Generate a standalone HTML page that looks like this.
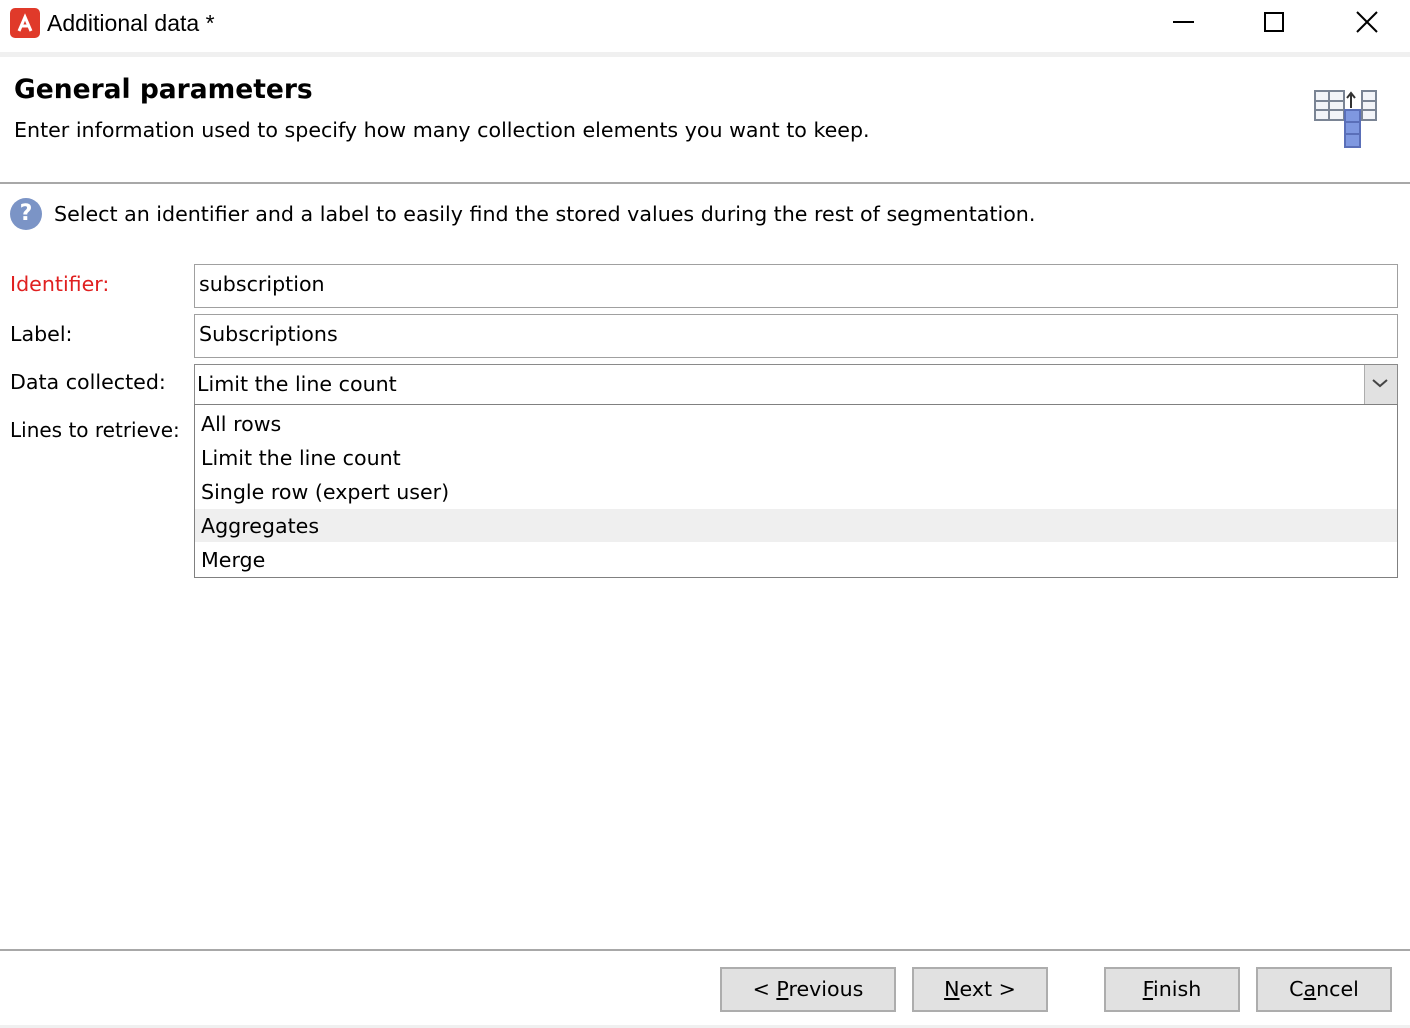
<!DOCTYPE html>
<html><head><style>
*{margin:0;padding:0;box-sizing:border-box}
body{width:1410px;height:1028px;background:#fff;font-family:"DejaVu Sans","Liberation Sans",sans-serif;color:#000;position:relative;overflow:hidden}
.a{position:absolute;white-space:nowrap}
.t{font-size:20.6px}
.box{position:absolute;border:1px solid #a0a0a0;background:#fff}
.btn{position:absolute;top:967px;height:45px;background:#e1e1e1;border:2px solid #adadad;font-size:20.6px;text-align:center;line-height:41px}
u{text-decoration:underline}
</style></head><body>
<div class="a" style="left:10px;top:8px;width:30px;height:30px;background:#e03a2a;border-radius:5px"></div>
<svg class="a" style="left:10px;top:8px" width="30" height="30"><path d="M9 23 L15 9 L21 23 M12 18 L18 18" stroke="#fff" stroke-width="3" fill="none"/></svg>
<div class="a" style="left:47px;top:10px;font-size:23px;font-family:'Liberation Sans',sans-serif">Additional data *</div>
<div class="a" style="left:1173px;top:21px;width:21px;height:2px;background:#000"></div>
<div class="a" style="left:1264px;top:12px;width:20px;height:20px;border:2px solid #000"></div>
<svg class="a" style="left:1356px;top:11px" width="22" height="22"><path d="M1 1L21 21M21 1L1 21" stroke="#000" stroke-width="2"/></svg>
<div class="a" style="left:0;top:52px;width:1410px;height:5px;background:#f0f0f0"></div>
<div class="a" style="left:14px;top:74px;font-size:26.5px;font-weight:bold">General parameters</div>
<div class="a t" style="left:14px;top:118px">Enter information used to specify how many collection elements you want to keep.</div>
<svg class="a" style="left:1310px;top:88px" width="70" height="62">
<rect x="5" y="3" width="29" height="29" fill="#f2f4f8" stroke="#7a8494" stroke-width="2"/>
<path d="M5 13H34M5 22H34M19 3V32" stroke="#7a8494" stroke-width="2"/>
<rect x="52" y="3" width="14" height="29" fill="#f2f4f8" stroke="#7a8494" stroke-width="2"/>
<path d="M52 13H66M52 22H66" stroke="#7a8494" stroke-width="2"/>
<rect x="35" y="22" width="15" height="37" fill="#7f98e0" stroke="#5a6fb8" stroke-width="2"/>
<path d="M35 34H50M35 46H50" stroke="#5a6fb8" stroke-width="2"/>
<path d="M41 20V5M37 10L41 5L45 10" stroke="#333" stroke-width="2" fill="none"/>
</svg>
<div class="a" style="left:0;top:182px;width:1410px;height:2px;background:#a8a8a8"></div>
<div class="a" style="left:10px;top:198px;width:32px;height:32px;border-radius:50%;background:#7b94c6;color:#fff;font-weight:bold;font-size:22px;text-align:center;line-height:32px">?</div>
<div class="a t" style="left:54px;top:202px">Select an identifier and a label to easily find the stored values during the rest of segmentation.</div>
<div class="a t" style="left:10px;top:272px;color:#e02020">Identifier:</div>
<div class="a t" style="left:10px;top:322px">Label:</div>
<div class="a t" style="left:10px;top:370px">Data collected:</div>
<div class="a t" style="left:10px;top:418px;font-size:20px">Lines to retrieve:</div>
<div class="box" style="left:194px;top:264px;width:1204px;height:44px"></div>
<div class="a t" style="left:199px;top:272px">subscription</div>
<div class="box" style="left:194px;top:314px;width:1204px;height:44px"></div>
<div class="a t" style="left:199px;top:322px">Subscriptions</div>
<div class="box" style="left:194px;top:364px;width:1204px;height:41px;border-color:#8a8a8a"></div>
<div class="a" style="left:1364px;top:365px;width:33px;height:39px;background:#e1e1e1;border-left:1px solid #adadad"></div>
<svg class="a" style="left:1370px;top:376px" width="20" height="14"><path d="M3 4L10 10L17 4" stroke="#444" stroke-width="2" fill="none"/></svg>
<div class="a t" style="left:197px;top:372px">Limit the line count</div>
<div class="box" style="left:194px;top:404px;width:1204px;height:174px;border-color:#808080"></div>
<div class="a" style="left:195px;top:509px;width:1202px;height:33px;background:#efefef"></div>
<div class="a t" style="left:201px;top:412px">All rows</div>
<div class="a t" style="left:201px;top:446px">Limit the line count</div>
<div class="a t" style="left:201px;top:480px">Single row (expert user)</div>
<div class="a t" style="left:201px;top:514px">Aggregates</div>
<div class="a t" style="left:201px;top:548px">Merge</div>
<div class="a" style="left:0;top:949px;width:1410px;height:2px;background:#a8a8a8"></div>
<div class="btn" style="left:720px;width:176px">&lt; <u>P</u>revious</div>
<div class="btn" style="left:912px;width:136px"><u>N</u>ext &gt;</div>
<div class="btn" style="left:1104px;width:136px"><u>F</u>inish</div>
<div class="btn" style="left:1256px;width:136px">C<u>a</u>ncel</div>
<div class="a" style="left:0;top:1025px;width:1410px;height:3px;background:#f0f0f0"></div>
</body></html>
